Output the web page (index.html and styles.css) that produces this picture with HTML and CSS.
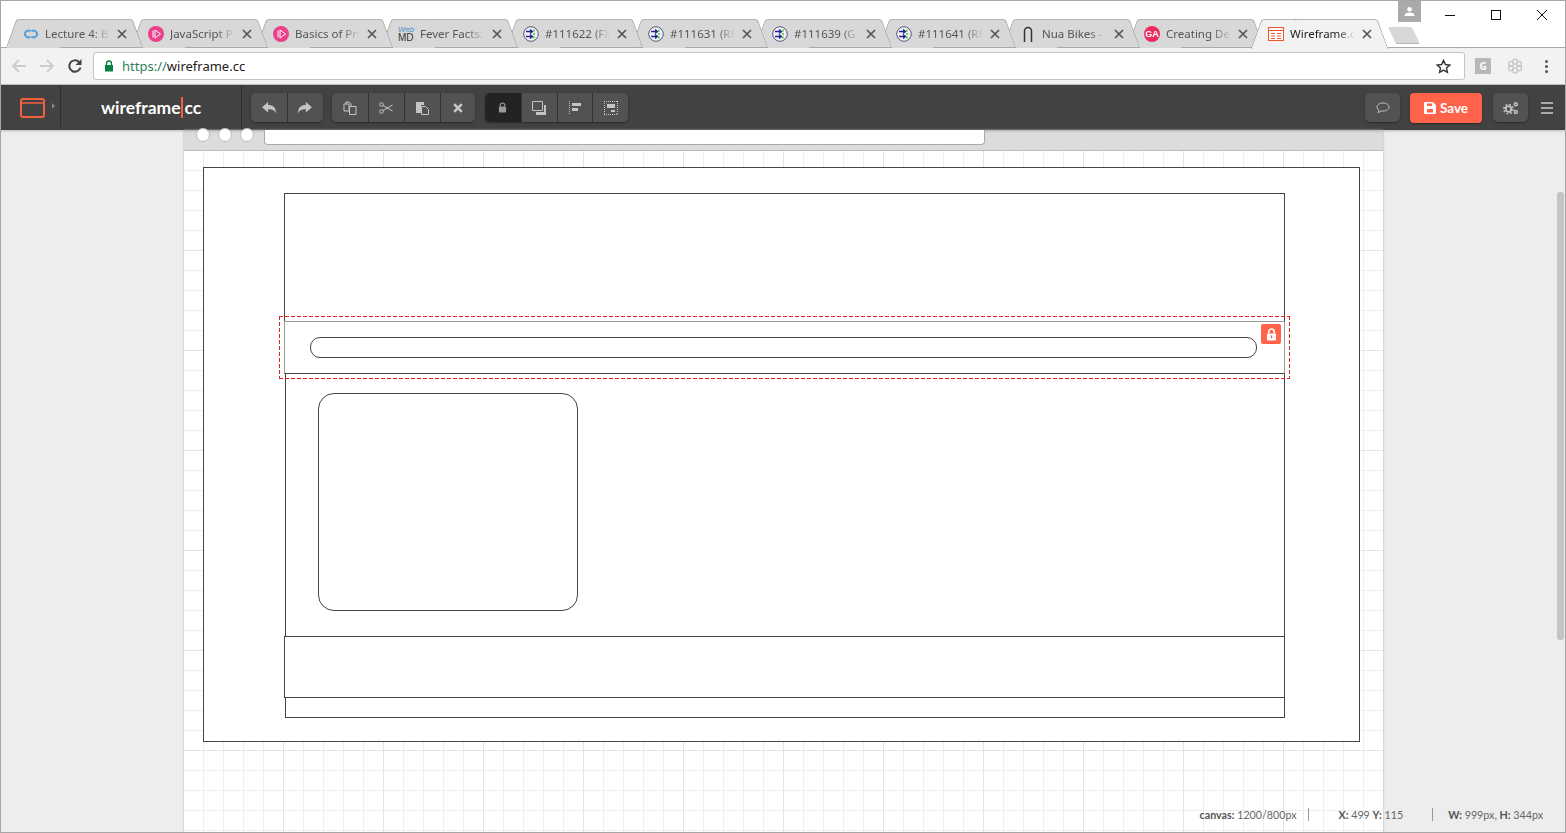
FILE: index.html
```html
<!DOCTYPE html>
<html lang="en">

<head>
    <meta charset="UTF-8">
    <title>Wireframe.cc</title>
    <link rel="stylesheet" href="styles.css">
</head>

<body>

    <svg class="icon-defs" width="0" height="0">
        <defs>
            <symbol id="fav-play" viewBox="0 0 16 16">
                <circle cx="8" cy="8" r="8" fill="#ec3f8c"/>
                <path d="M5 4.500v7M7 4v8l5.500-4z" fill="none" stroke="#fff" stroke-width="1"/>
            </symbol>
            <symbol id="fav-globe" viewBox="0 0 16 16">
                <circle cx="8" cy="8" r="7.300" fill="#f2f2f6" stroke="#56567a" stroke-width="1"/>
                <path d="M3 5.500h6M7 3.500l2.500 2-2.500 2M3 10.500h6M7 8.500l2.500 2-2.500 2" fill="none" stroke="#23238e" stroke-width="1.300"/>
                <path d="M11 3.500v2M11 7v2M11 10.500v2" stroke="#3ccf3c" stroke-width="1.600"/>
            </symbol>
            <symbol id="ico-x" viewBox="0 0 10 10">
                <path d="M1 1l8 8M9 1l-8 8" stroke="#555" stroke-width="1.700" fill="none"/>
            </symbol>
            <symbol id="ico-arrow" viewBox="0 0 18 16">
                <path d="M1 7l7-6v3.500c5.500 0 9 2.500 9 10-1.500-4-4-5-9-5V13z" fill="#c4c4c4"/>
            </symbol>
        </defs>
    </svg>

    <div class="tabstrip">
        <div class="tabs">
            <div class="tab">
                <svg class="favicon" viewBox="0 0 16 16"><path d="M7.500 5.500a3.300 3.300 0 1 0 0 5M8.500 10.500a3.300 3.300 0 1 0 0-5" fill="none" stroke="#5c9fdc" stroke-width="2"/></svg>
                <span class="tab-title">Lecture 4: Ba</span>
                <svg class="tab-close"><use href="#ico-x"/></svg>
            </div>
            <div class="tab">
                <svg class="favicon"><use href="#fav-play"/></svg>
                <span class="tab-title">JavaScript P</span>
                <svg class="tab-close"><use href="#ico-x"/></svg>
            </div>
            <div class="tab">
                <svg class="favicon"><use href="#fav-play"/></svg>
                <span class="tab-title">Basics of Pro</span>
                <svg class="tab-close"><use href="#ico-x"/></svg>
            </div>
            <div class="tab">
                <span class="favicon webmd"><span class="webmd-top">Web</span><span class="webmd-bottom">MD</span></span>
                <span class="tab-title">Fever Facts:</span>
                <svg class="tab-close"><use href="#ico-x"/></svg>
            </div>
            <div class="tab">
                <svg class="favicon"><use href="#fav-globe"/></svg>
                <span class="tab-title">#111622 (FX</span>
                <svg class="tab-close"><use href="#ico-x"/></svg>
            </div>
            <div class="tab">
                <svg class="favicon"><use href="#fav-globe"/></svg>
                <span class="tab-title">#111631 (RE</span>
                <svg class="tab-close"><use href="#ico-x"/></svg>
            </div>
            <div class="tab">
                <svg class="favicon"><use href="#fav-globe"/></svg>
                <span class="tab-title">#111639 (G</span>
                <svg class="tab-close"><use href="#ico-x"/></svg>
            </div>
            <div class="tab">
                <svg class="favicon"><use href="#fav-globe"/></svg>
                <span class="tab-title">#111641 (RE</span>
                <svg class="tab-close"><use href="#ico-x"/></svg>
            </div>
            <div class="tab">
                <svg class="favicon" viewBox="0 0 16 16"><path d="M4.500 16V5a3.500 3.500 0 0 1 7 0v11" fill="none" stroke="#333" stroke-width="1.500"/></svg>
                <span class="tab-title">Nua Bikes -</span>
                <svg class="tab-close"><use href="#ico-x"/></svg>
            </div>
            <div class="tab">
                <span class="favicon ga">GA</span>
                <span class="tab-title">Creating De</span>
                <svg class="tab-close"><use href="#ico-x"/></svg>
            </div>
            <div class="tab tab-active">
                <svg class="favicon" viewBox="0 0 16 16"><rect x="0.500" y="1.500" width="15" height="13" fill="#fff" stroke="#f0562c"/><path d="M0 4.500h16M3 7.500h4M9 7.500h4M3 10h4M9 10h4M3 12.500h4M9 12.500h4" stroke="#f0562c"/></svg>
                <span class="tab-title">Wireframe.c</span>
                <svg class="tab-close"><use href="#ico-x"/></svg>
            </div>
            <div class="new-tab"></div>
        </div>
        <div class="profile">
            <svg viewBox="0 0 12 12" width="11" height="11"><circle cx="6" cy="3.500" r="2.500" fill="#fff"/><path d="M0.500 11c0-3 2.500-4 5.500-4s5.500 1 5.500 4z" fill="#fff"/></svg>
        </div>
        <div class="window-controls">
            <svg viewBox="0 0 12 12" width="12" height="12"><path d="M1 6.500h10" stroke="#111"/></svg>
            <svg viewBox="0 0 12 12" width="12" height="12"><rect x="1.500" y="1.500" width="9" height="9" fill="none" stroke="#111"/></svg>
            <svg viewBox="0 0 12 12" width="12" height="12"><path d="M1 1l10 10M11 1L1 11" stroke="#111"/></svg>
        </div>
    </div>

    <div class="browser-bar">
        <div class="nav-icons">
            <svg viewBox="0 0 16 16" width="16" height="16"><path d="M15 8H2M8 2L2 8l6 6" fill="none" stroke="#ccc" stroke-width="1.800"/></svg>
            <svg viewBox="0 0 16 16" width="16" height="16"><path d="M1 8h13M8 2l6 6-6 6" fill="none" stroke="#ccc" stroke-width="1.800"/></svg>
            <svg viewBox="0 0 16 16" width="16" height="16"><path d="M13.500 9.500A5.700 5.700 0 1 1 12 4" fill="none" stroke="#444" stroke-width="2"/><path d="M14.500 1v6h-6z" fill="#444"/></svg>
        </div>
        <div class="address">
            <svg class="address-lock" viewBox="0 0 10 12" width="10" height="12"><path d="M2.500 5V3.500a2.500 2.500 0 0 1 5 0V5" fill="none" stroke="#0b8043" stroke-width="1.300"/><rect x="1" y="5" width="8" height="6.500" fill="#0b8043"/></svg>
            <span class="address-url"><span class="url-scheme">https://</span>wireframe.cc</span>
            <svg class="address-star" viewBox="0 0 16 16" width="15" height="15"><path d="M8 1.500l2 4.400 4.800.5-3.600 3.200 1 4.700L8 11.900l-4.200 2.400 1-4.700L1.200 6.400 6 5.900z" fill="none" stroke="#333" stroke-width="1.500"/></svg>
        </div>
        <div class="ext-g">G</div>
        <svg class="ext-flower" viewBox="0 0 16 16" width="16" height="16">
            <g fill="none" stroke="#c4c4c4" stroke-width="1.200"><circle cx="8" cy="3.500" r="2.500"/><circle cx="8" cy="12.500" r="2.500"/><circle cx="4" cy="5.800" r="2.500"/><circle cx="12" cy="5.800" r="2.500"/><circle cx="4" cy="10.200" r="2.500"/><circle cx="12" cy="10.200" r="2.500"/></g>
        </svg>
        <div class="kebab"><i></i><i></i><i></i></div>
    </div>

    <div class="app-bar">
        <div class="app-menu">
            <svg viewBox="0 0 25 20" width="25" height="20"><rect x="1" y="1" width="23" height="18" rx="2" fill="none" stroke="#f2603f" stroke-width="2"/><path d="M1 5h23" stroke="#f2603f" stroke-width="1.500"/></svg>
            <span class="app-menu-arrow"></span>
        </div>
        <div class="logo">wireframe<span class="logo-bar">cc</span></div>
        <div class="btn-group">
            <div class="btn"><svg viewBox="0 0 18 16" width="16" height="14"><use href="#ico-arrow"/></svg></div>
            <div class="btn"><svg class="flip" viewBox="0 0 18 16" width="16" height="14"><use href="#ico-arrow"/></svg></div>
        </div>
        <div class="btn-group">
            <div class="btn"><svg viewBox="0 0 14 14" width="14" height="14"><path d="M1 3h5v7H1zM3 3V1h3l2 2v2M6.500 5.500h6.500v8H6.500z" fill="none" stroke="#c4c4c4"/></svg></div>
            <div class="btn"><svg viewBox="0 0 14 12" width="14" height="12"><g fill="none" stroke="#c4c4c4"><circle cx="2.500" cy="2.500" r="1.800"/><circle cx="2.500" cy="9.500" r="1.800"/><path d="M4 3.500l9.500 5.500M4 8.500l9.500-5.500"/></g></svg></div>
            <div class="btn"><svg viewBox="0 0 14 14" width="14" height="14"><path d="M1 1h8v3H6v8H1z" fill="#c4c4c4"/><path d="M6.500 5.500h4l3 3v5h-7z" fill="none" stroke="#c4c4c4"/></svg></div>
            <div class="btn"><svg viewBox="0 0 10 10" width="10" height="10"><path d="M1.200 1.200l7.600 7.600M8.800 1.200L1.200 8.800" stroke="#c8c8c8" stroke-width="2.600"/></svg></div>
        </div>
        <div class="btn-group">
            <div class="btn btn-on"><svg viewBox="0 0 10 12" width="9" height="11"><path d="M2.500 5V3.500a2.500 2.500 0 0 1 5 0V5" fill="none" stroke="#999" stroke-width="1.300"/><rect x="1" y="5" width="8" height="6.500" rx="1" fill="#999"/></svg></div>
            <div class="btn"><svg viewBox="0 0 14 14" width="14" height="14"><path d="M0.500 0.500h10v9h-10z" fill="none" stroke="#c4c4c4"/><path d="M12 4h2v10H4v-3h8z" fill="#c4c4c4"/></svg></div>
            <div class="btn"><svg class="crisp" viewBox="0 0 12 14" width="12" height="14"><path d="M0.500 0v14" stroke="#c4c4c4" stroke-dasharray="1 1"/><path d="M3 2h9v3H3zM3 7h6v2.500H3z" fill="#c4c4c4"/></svg></div>
            <div class="btn"><svg class="crisp" viewBox="0 0 14 14" width="14" height="14"><path d="M0 .5h14M0 13.500h14M.5 0v14M13.500 0v14" fill="none" stroke="#c4c4c4" stroke-dasharray="1 1"/><path d="M3 3h8v4H3zM7 9h4v2H7z" fill="#c4c4c4"/></svg></div>
        </div>
        <div class="app-right">
            <div class="btn btn-single"><svg viewBox="0 0 14 12" width="14" height="12"><path d="M7 1C3.500 1 1 2.700 1 5c0 1.300.8 2.400 2 3.100-.1.900-.5 1.700-1 2.400 1.300-.2 2.500-.8 3.300-1.600.5.100 1.100.1 1.700.1 3.500 0 6-1.700 6-4S10.500 1 7 1z" fill="none" stroke="#c4c4c4"/></svg></div>
            <div class="btn-save"><svg viewBox="0 0 12 12" width="12" height="12"><path d="M0 1a1 1 0 0 1 1-1h8l3 3v8a1 1 0 0 1-1 1H1a1 1 0 0 1-1-1zM3 1.500V4h5V1.500zM3 7v3.500h6V7z" fill="#fff" fill-rule="evenodd"/></svg>Save</div>
            <div class="btn btn-single"><svg viewBox="0 0 16 14" width="16" height="14"><g fill="none" stroke="#c4c4c4"><circle cx="5.500" cy="8" r="2.800" stroke-width="1.800"/><circle cx="5.500" cy="8" r="4.600" stroke-width="1.600" stroke-dasharray="1.800 1.800"/><circle cx="12.800" cy="3.200" r="1.500" stroke-width="1.400"/><circle cx="12.800" cy="11" r="1.500" stroke-width="1.400"/></g></svg></div>
            <div class="hamburger"><i></i><i></i><i></i></div>
        </div>
    </div>

    <div class="workspace">
        <div class="canvas">
            <div class="page-head">
                <div class="page-dots"><i></i><i></i><i></i></div>
                <div class="page-url"></div>
            </div>
            <div class="grid-area"></div>

            <div class="shape shape-outer"></div>
            <div class="shape shape-main"></div>
            <div class="shape shape-top"></div>
            <div class="shape shape-nav"></div>
            <div class="shape shape-pill"></div>
            <div class="shape shape-card"></div>
            <div class="shape shape-foot"></div>
            <div class="select-box"></div>
            <div class="lock-badge">
                <svg viewBox="0 0 12 14" width="11" height="13"><path d="M3 6V4a3 3 0 0 1 6 0v2" fill="none" stroke="#fff" stroke-width="1.800"/><rect x="1" y="6" width="10" height="7.500" rx="1" fill="#fff"/><rect x="5.200" y="8" width="1.600" height="3" fill="#ff6349"/></svg>
            </div>
        </div>
        <div class="scroll-thumb"></div>
        <div class="status">
            <span class="status-item"><b>canvas:</b> 1200/800px</span>
            <span class="status-item status-pos"><b>X:</b> 499 <b>Y:</b> 115</span>
            <span class="status-item status-size"><b>W:</b> 999px, <b>H:</b> 344px</span>
        </div>
    </div>

</body>

</html>
```

FILE: styles.css
```css
/* Page frame */

* {
    box-sizing: border-box;
}

html,
body {
    height: 100%;
}

body {
    margin: 0;
    overflow: hidden;
    display: flex;
    flex-direction: column;
    background: #fff;
    border: 1px solid #a6a6a6;
    font-family: "Noto Sans", Arial, sans-serif;
}

.icon-defs {
    position: absolute;
}

/* Tab strip */

.tabstrip {
    height: 47px;
    flex: none;
    position: relative;
    border-bottom: 1px solid #a9a9a9;
}

.tabs {
    display: flex;
    position: absolute;
    left: 6px;
    top: 18px;
}

.tab {
    position: relative;
    width: 136px;
    height: 29px;
    margin-right: -11px;
    padding: 0 16px 0 16px;
    display: flex;
    align-items: center;
    font-size: 11.500px;
    color: #555;
}

.tab:nth-child(n+6) {
    margin-right: -12px;
}

.tab::before,
.tab::after {
    content: "";
    position: absolute;
    top: 0;
    bottom: 0;
    width: 60%;
    background: #d8d8d8;
    border-top: 1px solid #b4b4b4;
    border-radius: 3px 3px 0 0;
}

.tab::before {
    left: 4px;
    transform: skewX(-20deg);
    border-left: 1px solid #a4a4a4;
    z-index: 1;
}

.tab::after {
    right: 5px;
    transform: skewX(20deg);
    border-right: 1px solid #a4a4a4;
    border-bottom: 1px solid #a9a9a9;
    z-index: 2;
}

.tab > * {
    position: relative;
    z-index: 3;
}

.tab-active {
    z-index: 5;
    color: #222;
}

.tab-active::before,
.tab-active::after {
    background: #f2f2f2;
    border-bottom: 0;
    bottom: -1px;
}

.favicon {
    width: 16px;
    height: 16px;
    flex: none;
    margin-right: 6px;
}

.tab-title {
    flex: 1;
    min-width: 0;
    white-space: nowrap;
    -webkit-mask-image: linear-gradient(to right, #000 72%, transparent 100%);
    mask-image: linear-gradient(to right, #000 72%, transparent 100%);
}

.tab-close {
    width: 10px;
    height: 10px;
    flex: none;
    margin-left: 7px;
}

.webmd {
    display: flex;
    flex-direction: column;
    font-family: "Liberation Sans", sans-serif;
}

.webmd-top {
    color: #4d93c9;
    font-size: 8px;
    font-style: italic;
    line-height: 7px;
}

.webmd-bottom {
    color: #333;
    font-size: 10px;
    line-height: 9px;
}

.ga {
    border-radius: 50%;
    background: #ee2a5d;
    color: #fff;
    font-family: "Liberation Sans", sans-serif;
    font-size: 9px;
    font-weight: 700;
    line-height: 16px;
    text-align: center;
}

.new-tab {
    width: 24px;
    height: 17px;
    margin: 8px 0 0 16px;
    background: #d8d8d8;
    border-bottom: 1px solid #b4b4b4;
    border-radius: 2px;
    transform: skewX(25deg);
}

.profile {
    position: absolute;
    left: 1397px;
    top: 0;
    width: 23px;
    height: 21px;
    background: #aaa;
    display: flex;
    align-items: center;
    justify-content: center;
}

.window-controls {
    position: absolute;
    right: 17px;
    top: 8px;
    display: flex;
    gap: 34px;
}

/* Browser toolbar */

.browser-bar {
    height: 37px;
    flex: none;
    display: flex;
    align-items: center;
    padding: 0 10px;
    background: #f2f2f2;
    border-bottom: 1px solid #bdbdbd;
}

.nav-icons {
    display: flex;
    gap: 12px;
    width: 82px;
}

.address {
    width: 1372px;
    height: 28px;
    display: flex;
    align-items: center;
    padding: 0 13px 0 10px;
    background: #fff;
    border: 1px solid #c4c4c4;
    border-radius: 3px;
}

.address-url {
    flex: 1;
    margin-left: 8px;
    font-size: 13px;
    color: #222;
}

.url-scheme {
    color: #2e7d5b;
}

.ext-g {
    width: 16px;
    height: 16px;
    margin-left: 10px;
    background: #b8b8b8;
    color: #fff;
    font-size: 10px;
    font-weight: 700;
    line-height: 16px;
    text-align: center;
}

.ext-flower {
    margin-left: 16px;
}

.kebab {
    display: flex;
    flex-direction: column;
    gap: 2px;
    margin-left: 22px;
}

.kebab i {
    width: 3px;
    height: 3px;
    border-radius: 50%;
    background: #555;
}

/* wireframe.cc bar */

.app-bar {
    height: 45px;
    flex: none;
    display: flex;
    align-items: flex-start;
    background: #424242;
}

.app-menu {
    width: 60px;
    height: 42px;
    padding: 13px 0 0 19px;
    display: flex;
    border-right: 1px solid #2e2e2e;
}

.app-menu-arrow {
    margin: 5px 0 0 7px;
    width: 0;
    height: 0;
    border-left: 3px solid #888;
    border-top: 3.500px solid transparent;
    border-bottom: 3.500px solid transparent;
}

.logo {
    width: 181px;
    height: 45px;
    padding: 12px 0 0 40px;
    border-right: 1px solid #2e2e2e;
    font-family: Lato, sans-serif;
    font-weight: 700;
    font-size: 17.500px;
    color: #fff;
}

.logo-bar {
    padding-left: 2px;
    border-left: 2px solid #f2603f;
}

.btn-group {
    display: flex;
    margin: 8px 0 0 9.750px;
    border-radius: 5px;
    box-shadow: 0 1px 2px #2a2a2a;
}

.logo + .btn-group {
    margin-left: 9px;
}

.btn {
    width: 35.750px;
    height: 29px;
    display: flex;
    align-items: center;
    justify-content: center;
    background: #525252;
    border-left: 1px solid #333;
}

.btn:first-child {
    border-left: 0;
    border-radius: 5px 0 0 5px;
}

.btn:last-child {
    border-radius: 0 5px 5px 0;
}

.btn-on {
    background: #232323;
}

.app-right {
    margin-left: auto;
    display: flex;
    align-items: center;
    height: 29px;
    margin-top: 8px;
    padding-right: 12px;
}

.app-right .btn-single {
    width: 35px;
    border: 0;
    border-radius: 5px;
    box-shadow: 0 1px 2px #2a2a2a;
}

.btn-save {
    width: 72px;
    height: 30px;
    margin: 0 11px 0 10px;
    display: flex;
    align-items: center;
    justify-content: center;
    gap: 4px;
    background: #ff6349;
    border-radius: 4px;
    box-shadow: 0 1px 2px #2a2a2a;
    color: #fff;
    font-family: Lato, sans-serif;
    font-size: 13.500px;
    font-weight: 700;
}

.hamburger {
    display: flex;
    flex-direction: column;
    gap: 3px;
    margin-left: 13px;
}

.hamburger i {
    width: 12px;
    height: 2px;
    background: #aaa;
}

/* Workspace and drawing */

.workspace {
    flex: 1;
    position: relative;
    display: flex;
    background: #ededed;
    box-shadow: inset 0 3px 3px -2px #bbb;
}

.canvas {
    position: relative;
    width: 1199px;
    margin-left: 183px;
    display: flex;
    flex-direction: column;
    background: #fff;
    box-shadow: 0 0 2px #aaa;
}

.page-head {
    height: 21px;
    flex: none;
    position: relative;
    display: flex;
    align-items: flex-start;
    gap: 10px;
    padding-left: 12px;
    background: #dcdcdc;
    border-bottom: 1px solid #bbb;
    box-shadow: inset 0 3px 3px -2px #aaa;
}

.page-dots {
    display: flex;
    gap: 8px;
    margin-top: -2px;
}

.page-dots i {
    width: 14px;
    height: 14px;
    background: #fff;
    border: 1px solid #bdbdbd;
    border-radius: 50%;
}

.page-url {
    width: 721px;
    height: 15px;
    background: #fff;
    border: 1px solid #aaa;
    border-top: 0;
    border-radius: 0 0 4px 4px;
}

.grid-area {
    flex: 1;
    background-color: #fff;
    background-image:
        linear-gradient(to right, #e4e4e4 1px, transparent 1px),
        linear-gradient(to bottom, #e4e4e4 1px, transparent 1px),
        linear-gradient(to right, #eee 1px, transparent 1px),
        linear-gradient(to bottom, #eee 1px, transparent 1px);
    background-size: 100px 100px, 100px 100px, 20px 20px, 20px 20px;
    background-position: -1px -1px;
}

.shape {
    position: absolute;
    background: #fff;
    border: 1px solid #444;
}

.shape-outer {
    left: 19px;
    top: 37px;
    width: 1157px;
    height: 575px;
}

.shape-main {
    left: 101px;
    top: 63px;
    width: 1000px;
    height: 525px;
}

.shape-top {
    left: 100px;
    top: 63px;
    width: 1001px;
    height: 129px;
    border-bottom: 0;
}

.shape-nav {
    left: 100px;
    top: 191px;
    width: 1001px;
    height: 53px;
    border-color: #9c9c9c;
    border-bottom-color: #444;
}

.shape-pill {
    left: 126px;
    top: 207px;
    width: 947px;
    height: 21px;
    border-radius: 10px;
}

.shape-card {
    left: 134px;
    top: 263px;
    width: 260px;
    height: 218px;
    border-radius: 16px;
}

.shape-foot {
    left: 100px;
    top: 506px;
    width: 1001px;
    height: 62px;
}

.select-box {
    position: absolute;
    left: 95px;
    top: 186px;
    width: 1011px;
    height: 63px;
    background:
        repeating-linear-gradient(to right, #e3231b 0 4px, transparent 4px 6px) left top / 100% 1px no-repeat,
        repeating-linear-gradient(to right, #e3231b 0 4px, transparent 4px 6px) left bottom / 100% 1px no-repeat,
        repeating-linear-gradient(to bottom, #e3231b 0 4px, transparent 4px 6px) left top / 1px 100% no-repeat,
        repeating-linear-gradient(to bottom, #e3231b 0 4px, transparent 4px 6px) right top / 1px 100% no-repeat;
}

.lock-badge {
    position: absolute;
    left: 1077px;
    top: 194px;
    width: 20px;
    height: 20px;
    display: flex;
    align-items: center;
    justify-content: center;
    background: #ff6349;
    border-radius: 2px;
}

.scroll-thumb {
    position: absolute;
    right: 1px;
    top: 62px;
    width: 7px;
    height: 448px;
    background: #c4c4c4;
    border-radius: 3px;
}

.status {
    position: absolute;
    right: 22px;
    bottom: 11px;
    display: flex;
    font-family: Lato, sans-serif;
    font-size: 10.700px;
    line-height: 13px;
    color: #666;
}

.status b {
    color: #555;
}

.status-item + .status-item {
    margin-left: 11px;
    border-left: 1px solid #999;
}

.status-pos {
    padding: 0 18px 0 30px;
}

.status-size {
    padding-left: 15px;
}

.flip {
    transform: scaleX(-1);
}

.crisp {
    shape-rendering: crispEdges;
}
```
